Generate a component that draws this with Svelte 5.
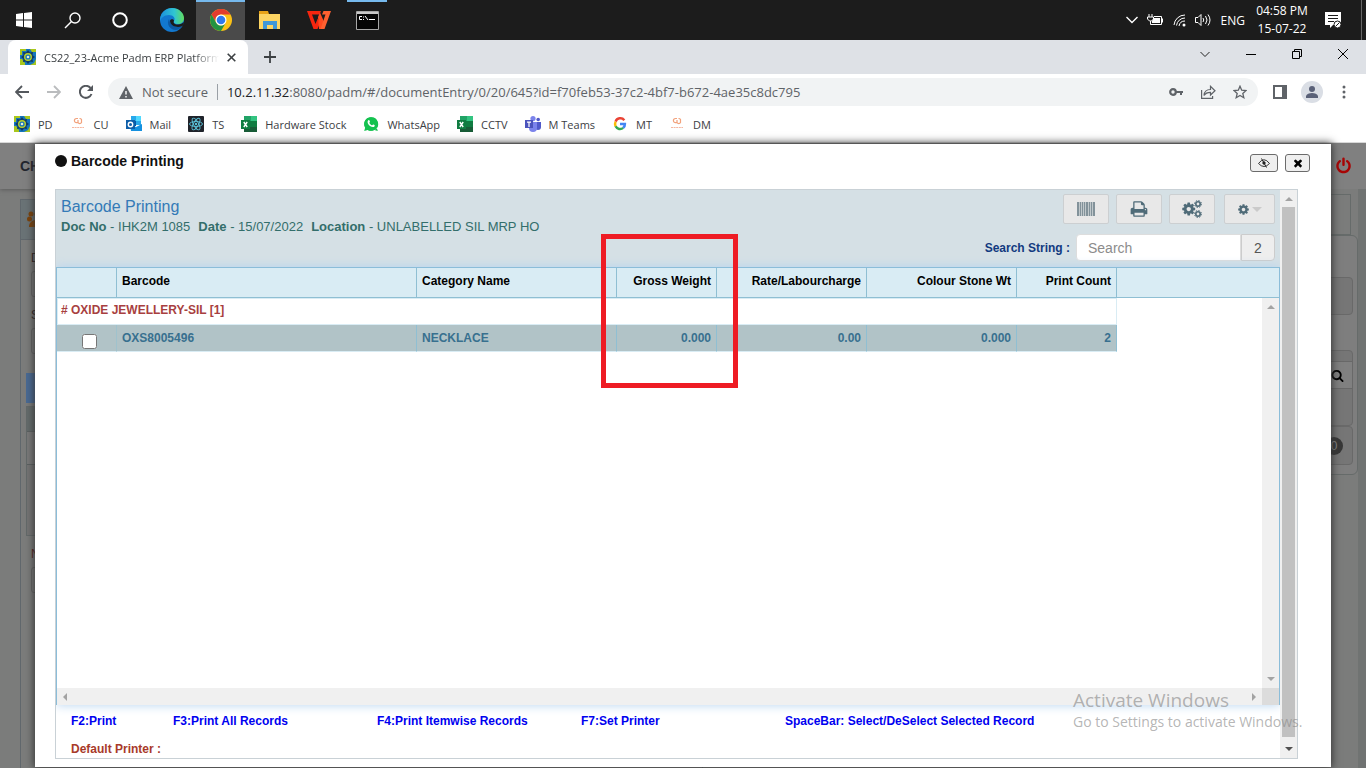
<script>
  const bookmarks = [
    { icon: 'padm', text: 'PD' },
    { icon: 'cu', text: 'CU' },
    { icon: 'outlook', text: 'Mail' },
    { icon: 'react', text: 'TS' },
    { icon: 'excel', text: 'Hardware Stock' },
    { icon: 'whatsapp', text: 'WhatsApp' },
    { icon: 'excel', text: 'CCTV' },
    { icon: 'teams', text: 'M Teams' },
    { icon: 'google', text: 'MT' },
    { icon: 'cu', text: 'DM' },
  ];

  const shortcuts = [
    'F2:Print',
    'F3:Print All Records',
    'F4:Print Itemwise Records',
    'F7:Set Printer',
    'SpaceBar: Select/DeSelect Selected Record',
  ];

  const rows = [
    { barcode: 'OXS8005496', category: 'NECKLACE', gross: '0.000', rate: '0.00', stone: '0.000', count: 2 },
  ];

  const barWidths = [2, 1, 1, 1, 2, 1, 1, 2];

  let search = $state('');
  let selected = $state([false]);

  const cog =
    'M1152 896q0-106-75-181t-181-75-181 75-75 181 75 181 181 75 181-75 75-181zm512-109v222q0 12-8 23t-20 13l-185 28q-19 54-39 91 35 50 107 138 10 12 10 25t-9 23q-27 37-99 108t-94 71q-12 0-26-9l-138-108q-44 23-91 38-16 136-29 186-7 28-36 28h-222q-14 0-24.5-8.5t-11.5-21.5l-28-184q-49-16-90-37l-141 107q-10 9-25 9-14 0-25-11-126-114-165-168-7-10-7-23 0-12 8-23 15-21 51-66.5t54-70.5q-27-50-41-99l-183-27q-13-2-21-12.5t-8-23.5v-222q0-12 8-23t19-13l186-28q14-46 39-92-40-57-107-138-10-12-10-24 0-10 9-23 26-36 98.5-107.5t94.5-71.5q13 0 26 10l138 107q44-23 91-38 16-136 29-186 7-28 36-28h222q14 0 24.5 8.5t11.5 21.5l28 184q49 16 90 37l142-107q9-9 24-9 13 0 25 10 129 119 165 170 7 8 7 22 0 12-8 23-15 21-51 66.5t-54 70.5q26 50 41 98l183 28q13 2 21 12.5t8 23.5z';
</script>

{#snippet siteIcon(name)}
  <svg class="siteIcon" viewBox="0 0 16 16" width="16" height="16" aria-hidden="true">
    {#if name === 'padm'}
      <path fill="#1575bd" d="M0 0h16v16H0z" />
      <path fill="#a9c71c" d="M0 0h6v2H2v4H0zM10 0h6v3h-4zM0 10h2l3 4v2H0zM16 10v6h-6l4-2z" />
      <path fill="#123c63" d="M3 3l3 .5L8 1l2 2.500L13 3l-.5 3L15 8l-2.500 2 .5 3-3-.5L8 15l-2-2.500L3 13l.5-3L1 8l2.500-2z" />
      <circle cx="8" cy="8" r="3.300" fill="#1575bd" stroke="#b8d22b" stroke-width="1.400" />
      <circle cx="8" cy="8" r="1.300" fill="#e8f0d0" />
    {:else if name === 'cu'}
      <path fill="none" stroke="#f2a27c" stroke-width="1.200" d="M8 2.500H6.500a2 2 0 000 4.200H8M8 4v2.500a2 2 0 003.500 0v-3a2 2 0 00-2-1" />
      <path stroke="#f6b7a0" stroke-dasharray="2 .6" d="M2 11.500h12" />
    {:else if name === 'outlook'}
      <path fill="#28a8ea" d="M5 0h10v9H5z" />
      <path fill="#50d9ff" d="M10 0h5v5h-5z" />
      <path fill="#0358a7" d="M5 5h5v5H5z" />
      <path fill="#1490df" d="M4 8l6 3 6-3v7H5z" />
      <path fill="#0f5ea8" d="M0 4h9v9H0z" />
      <circle cx="4.500" cy="8.500" r="2.200" fill="none" stroke="#fff" stroke-width="1.400" />
    {:else if name === 'react'}
      <rect width="16" height="16" rx="1" fill="#20232a" />
      <g fill="none" stroke="#5cc5dc" stroke-width=".9">
        <ellipse cx="8" cy="8" rx="6.500" ry="2.500" />
        <ellipse cx="8" cy="8" rx="6.500" ry="2.500" transform="rotate(60 8 8)" />
        <ellipse cx="8" cy="8" rx="6.500" ry="2.500" transform="rotate(120 8 8)" />
      </g>
      <circle cx="8" cy="8" r="1.200" fill="#5cc5dc" />
    {:else if name === 'excel'}
      <path fill="#21a366" d="M3 0h7v6H3z" />
      <path fill="#33c481" d="M10 0h6v6h-6z" />
      <path fill="#107c41" d="M3 5h13v6H3z" />
      <path fill="#185c37" d="M3 11h13v5H3z" />
      <path fill="#107c41" d="M0 4h9v9H0z" />
      <path stroke="#fff" stroke-width="1.400" d="M2.800 6l3.400 5M6.200 6l-3.400 5" />
    {:else if name === 'whatsapp'}
      <path fill="#14c24f" d="M8 1.200A6.800 6.800 0 112.300 11.600L1.200 15l3.500-.9A6.800 6.800 0 018 1.200z" transform="matrix(-1 0 0 1 16 0)" />
      <path fill="#14c24f" d="M8 1.200a6.800 6.800 0 11-3.300 12.700L1.200 15l1-3.600A6.800 6.800 0 018 1.200z" />
      <path fill="#fff" d="M5.300 4.300c1-.7 1.300.4 1.600 1.300.2.600-.7 1-.5 1.400.6 1.100 1.300 1.800 2.500 2.300.5.1.9-1.100 1.400-.8 1 .5 2 .7 1.300 1.700-1 1.400-2.800 1-4.700-.3C4.700 8.200 3.800 5.700 5.300 4.300z" />
    {:else if name === 'teams'}
      <circle cx="8" cy="2.600" r="2.600" fill="#7b83eb" />
      <circle cx="13.200" cy="3.500" r="1.800" fill="#5059c9" />
      <path fill="#5059c9" d="M10 6h6v5a3 3 0 01-6 0z" />
      <path fill="#7b83eb" d="M4 6h8v6a4 4 0 01-8 0z" />
      <path fill="#4b53bc" d="M0 4h8v8H0z" />
      <path stroke="#fff" stroke-width="1.200" d="M2 6.200h4M4 6v5" />
    {:else if name === 'google'}
      <g fill="none" stroke-width="2.500">
        <path stroke="#ea4335" d="M12.300 4.200A5 5 0 003.600 5.700" />
        <path stroke="#fbbc05" d="M3.600 5.700a5 5 0 000 4.600" />
        <path stroke="#34a853" d="M3.600 10.300a5 5 0 007.600 1.600" />
        <path stroke="#4285f4" d="M11.200 11.900A5 5 0 0012.900 8H8" />
      </g>
    {/if}
  </svg>
{/snippet}

<div class="screen">
  <header class="taskbar">
    <button aria-label="Start">
      <svg width="16" height="16" viewBox="0 0 16 16"><path fill="#fff" d="M0 2l7-1v6.500H0zM8 .9L16 0v7.500H8zM0 8.500h7V15l-7-1zM8 8.500h8V16l-8-1z" /></svg>
    </button>
    <button aria-label="Search Windows">
      <svg width="17" height="17" viewBox="0 0 17 17" fill="none" stroke="#fff" stroke-width="1.400"><circle cx="11" cy="6" r="5" /><path d="M7.500 9.500L1 16" /></svg>
    </button>
    <button aria-label="Cortana">
      <svg width="18" height="18" viewBox="0 0 18 18"><circle cx="9" cy="9" r="6.800" fill="none" stroke="#fff" stroke-width="2" /></svg>
    </button>
    <button class="app" aria-label="Edge">
      <svg width="24" height="24" viewBox="0 0 24 24">
        <defs>
          <linearGradient id="edgeTop" x1="0" x2="1"><stop stop-color="#1b8fdc" /><stop offset=".6" stop-color="#30c5d2" /><stop offset="1" stop-color="#62dc5c" /></linearGradient>
        </defs>
        <circle cx="12" cy="12" r="12" fill="#1278cf" />
        <path fill="url(#edgeTop)" d="M0 11C1 4 6 0 12 0c7 0 12 5 12 10 0 4-3 6-6 6-3 0-5-1-4-3 2-3-1-6-5-6-5 0-8 3-9 6z" />
        <path fill="#0c59a4" d="M9 11c-3 5 1 11 7 11 3-.6 5-2 6.500-4-4 2.500-12 1-13.500-7z" />
        <path fill="#1b1b1b" d="M14 12.500c-1 2 0 4 4 4 2.500 0 4.500-1 5.800-2.500.1 2-.5 3-1.300 4C17 20.500 10 18 10 12.500c1-2 3.500-1.500 4 0z" />
      </svg>
    </button>
    <button class="app active" aria-label="Chrome">
      <svg width="22" height="22" viewBox="0 0 22 22">
        <circle cx="11" cy="11" r="11" fill="#fbc116" />
        <path fill="#e33b2e" d="M1.500 5.500a11 11 0 0119 0H11a5.500 5.500 0 00-4.800 8.200z" />
        <path fill="#229342" d="M1.500 5.500l4.700 8.200A5.500 5.500 0 0011 16.500c2 0 3.800-1 4.800-2.800L11 22A11 11 0 011.500 5.500z" />
        <circle cx="11" cy="11" r="5.500" fill="#fff" />
        <circle cx="11" cy="11" r="4.300" fill="#3079ee" />
      </svg>
    </button>
    <button class="app" aria-label="File Explorer">
      <svg width="22" height="18" viewBox="0 0 22 18">
        <path fill="#e8a317" d="M0 0h9l1 3h11v3H0z" />
        <path fill="#fcd462" d="M0 3h21v15H0z" />
        <path fill="#3f97d8" d="M4 10h14v8h-4v-4H8v4H4z" />
      </svg>
    </button>
    <button class="app" aria-label="WPS Office">
      <svg width="24" height="18" viewBox="0 0 24 18">
        <path fill="#f5260f" d="M0 0h14l-1.500 3.500H5L8.500 13l2.200-5.500L13 12l-2.500 6h-4z" />
        <path fill="#ff4a20" d="M11 6l2-4.500L17.500 12 15.500 18H12z" />
        <path fill="#ff6030" d="M13.500 18L18.500 3.500H15L16.500 0H24l-6.500 18z" />
      </svg>
    </button>
    <button class="app running" aria-label="Command Prompt">
      <svg width="23" height="19" viewBox="0 0 23 19">
        <path fill="#050505" stroke="#a8a8a8" d="M.5.5h22v18H.5z" />
        <path fill="#c8c8c8" d="M1 1h21v2H1z" />
        <path stroke="#fff" fill="none" d="M6 5.500H3.500v3H6M7.500 5.500v1M7.500 8v1M9 5l3 4M13 8.500h6" />
      </svg>
    </button>

    <div class="tray">
      <svg width="12" height="8" viewBox="0 0 12 8"><path fill="none" stroke="#fff" stroke-width="1.400" d="M.5 1L6 6.500 11.500 1" /></svg>
      <svg width="17" height="14" viewBox="0 0 17 14"><path fill="none" stroke="#fff" d="M2 1v3M5 1v3M.5 4h6v2l-2 2h-2l-2-2zM3.500 8v3.500h11v-8H7" /><path fill="#fff" d="M7 5h6v5H5V8zM15 5.500h1v4h-1z" /></svg>
      <svg width="13" height="14" viewBox="0 0 13 14" fill="none" stroke="#fff"><path d="M1 12A11 11 0 0112 2M3.500 12.500A8.500 8.500 0 0112 5M6 13A6 6 0 0112 8" /><circle cx="11" cy="12" r="1.500" fill="#fff" stroke="none" /></svg>
      <svg width="17" height="14" viewBox="0 0 17 14" fill="none" stroke="#fff"><path d="M.5 4.500H3l3-3v11l-3-3H.5zM8 5q1.500 2 0 4M10.500 3q3 4 0 8M13 1.500q4 5.500 0 11" /></svg>
      <span class="lang">ENG</span>
      <span class="clock">04:58 PM<br />15-07-22</span>
      <svg width="17" height="17" viewBox="0 0 17 17"><path fill="#fff" d="M0 0h16v13H8l-3 3v-3H0z" /><path stroke="#1c1c1c" d="M3 3.500h10M3 6.500h10M3 9.500h6" /><circle cx="12.500" cy="12.500" r="3.500" fill="#fff" stroke="#1c1c1c" /><path stroke="#1c1c1c" d="M10.500 14.500l4-4" /></svg>
    </div>
  </header>

  <div class="tabStrip">
    <div class="tab">
      {@render siteIcon('padm')}
      <span class="tabTitle">CS22_23-Acme Padm ERP Platform</span>
      <button aria-label="Close tab">
        <svg width="9" height="9" viewBox="0 0 9 9"><path stroke="#3c4043" stroke-width="1.600" d="M.7.7l7.600 7.600M8.300.7L.7 8.300" /></svg>
      </button>
    </div>
    <button class="newTab" aria-label="New tab">
      <svg width="12" height="12" viewBox="0 0 12 12"><path stroke="#3c4043" stroke-width="1.800" d="M6 0v12M0 6h12" /></svg>
    </button>
    <div class="windowButtons">
      <button aria-label="Search tabs"><svg width="10" height="7" viewBox="0 0 10 7"><path fill="none" stroke="#222" d="M.5 1L5 5.500 9.500 1" /></svg></button>
      <button aria-label="Minimize"><svg width="10" height="2" viewBox="0 0 10 2"><path fill="#000" d="M0 1h10v1H0z" /></svg></button>
      <button aria-label="Restore"><svg width="10" height="10" viewBox="0 0 10 10"><path fill="none" stroke="#000" d="M.5 2.500h7v7h-7zM2.500 2V.5h7v7H8" /></svg></button>
      <button aria-label="Close"><svg width="10" height="10" viewBox="0 0 10 10"><path stroke="#000" d="M0 0l10 10M10 0L0 10" /></svg></button>
    </div>
  </div>

  <div class="toolbar">
    <button aria-label="Back"><svg width="14" height="14" viewBox="0 0 14 14" fill="none" stroke="#54585d" stroke-width="1.800"><path d="M14 7H1.500M7 1L1 7l6 6" /></svg></button>
    <button aria-label="Forward"><svg width="14" height="14" viewBox="0 0 14 14" fill="none" stroke="#babcbe" stroke-width="1.800"><path d="M0 7h12.500M7 1l6 6-6 6" /></svg></button>
    <button aria-label="Reload"><svg width="14" height="14" viewBox="0 0 14 14"><path fill="none" stroke="#54585d" stroke-width="2" d="M12.500 9A6 6 0 1111.500 3" /><path fill="#54585d" d="M14 0v6H8z" /></svg></button>
    <div class="addressBar">
      <svg width="14" height="13" viewBox="0 0 14 13"><path fill="#5f6368" d="M7 0l7 13H0z" /><path stroke="#fff" stroke-width="1.400" d="M7 5v3.500M7 10v1.400" /></svg>
      <span class="notSecure">Not secure</span>
      <span class="url"><b>10.2.11.32</b>:8080/padm/#/documentEntry/0/20/645?id=f70feb53-37c2-4bf7-b672-4ae35c8dc795</span>
      <button aria-label="Passwords"><svg width="14" height="8" viewBox="0 0 14 8"><circle cx="4" cy="4" r="2.800" fill="none" stroke="#5f6368" stroke-width="2.200" /><path fill="#5f6368" d="M7 3h7v2h-1v2h-2V5H7z" /></svg></button>
      <button aria-label="Share"><svg width="15" height="14" viewBox="0 0 15 14" fill="none" stroke="#5f6368" stroke-width="1.200"><path d="M.6 5v8.400h11V11M3 10.500c.3-4 3-6 6.500-6V1.300L14 5.700 9.500 10V7.300C6.500 7.300 4.500 8 3 10.500z" /></svg></button>
      <button aria-label="Bookmark"><svg width="14" height="14" viewBox="0 0 14 14"><path fill="none" stroke="#5f6368" stroke-width="1.300" d="M7 1.200l1.700 4 4.300.4-3.200 2.900 1 4.200L7 10.500l-3.800 2.200 1-4.200L1 5.600l4.300-.4z" /></svg></button>
    </div>
    <button class="sidePanel" aria-label="Side panel"><svg width="14" height="14" viewBox="0 0 14 14"><path fill="#5f6368" fill-rule="evenodd" d="M0 0h14v14H0zM2 2v10h7V2z" /></svg></button>
    <button class="profile" aria-label="Profile"><svg width="14" height="14" viewBox="0 0 14 14" fill="#5a6178"><circle cx="7" cy="4" r="3" /><path d="M1 13v-2c1-4 11-4 12 0v2z" /></svg></button>
    <button aria-label="Menu"><svg width="4" height="14" viewBox="0 0 4 14" fill="#5f6368"><circle cx="2" cy="2" r="1.500" /><circle cx="2" cy="7" r="1.500" /><circle cx="2" cy="12" r="1.500" /></svg></button>
  </div>

  <nav class="bookmarks">
    {#each bookmarks as bookmark}
      <a href="#/{bookmark.text}">{@render siteIcon(bookmark.icon)}{bookmark.text}</a>
    {/each}
  </nav>

  <div class="page">
    <!-- the document screen, dimmed behind the dialog -->
    <div class="backdrop">
      <div class="appBar">
        <strong>CH</strong>
        <svg width="17" height="18" viewBox="0 0 1792 1792"><path fill="#a80505" d="M1664 896q0 156-61 298t-164 245-245 164-298 61-298-61-245-164-164-245-61-298q0-182 80.500-343t226.500-270q43-32 95.500-25t83.500 50q32 42 24.500 94.500t-49.500 84.500q-98 74-151.500 181t-53.500 228q0 104 40.500 198.500t109.500 163.500 163.500 109.500 198.500 40.500 198.500-40.500 163.500-109.500 109.500-163.500 40.500-198.500q0-121-53.500-228t-151.500-181q-42-32-49.500-84.500t24.500-94.500q31-43 84-50t95 25q146 109 226.500 270t80.500 343zm-640-768v640q0 52-38 90t-90 38-90-38-38-90v-640q0-52 38-90t90-38 90 38 38 90z" /></svg>
      </div>
      <div class="columns">
        <div class="entry">
          <div class="entryHead">
            <svg width="16" height="16" viewBox="0 0 16 16" fill="#7d4208"><circle cx="4" cy="3" r="2.500" /><circle cx="2.500" cy="8" r="2.500" /><circle cx="10" cy="3" r="2.500" /><path d="M2 16c0-9 12-9 12 0z" /></svg>
          </div>
          <span class="label">D</span>
          <div class="field"></div>
          <span class="label">S</span>
          <div class="field"></div>
          <div class="blueBar"></div>
          <div class="lines"><div></div><div></div></div>
          <span class="label red">N</span>
          <div class="field"></div>
        </div>
        <div class="side">
          <div class="sideTop"></div>
          <div class="sideBody">
            <div class="box first"></div>
            <div class="box">
              <div class="find">
                <svg width="13" height="13" viewBox="0 0 1792 1792"><path d="M1216 832q0-185-131.500-316.500t-316.500-131.500-316.500 131.500-131.500 316.500 131.500 316.500 316.500 131.500 316.500-131.500 131.500-316.500zm512 832q0 52-38 90t-90 38q-54 0-90-38l-343-342q-179 124-399 124-143 0-273.500-55.500t-225-150-150-225-55.500-273.500 55.500-273.500 150-225 225-150 273.500-55.500 273.500 55.500 225 150 150 225 55.500 273.500q0 220-124 399l343 343q37 37 37 90z" /></svg>
              </div>
            </div>
            <div class="box total"><span>0</span></div>
          </div>
        </div>
      </div>
    </div>

    <div class="dialog" role="dialog" aria-labelledby="dialogTitle">
      <div class="dialogHead">
        <i class="dot"></i>
        <h1 id="dialogTitle">Barcode Printing</h1>
        <button class="wide" aria-label="Hide">
          <svg width="12" height="10" viewBox="0 0 12 10" fill="none" stroke="#222"><path stroke-width=".9" d="M.5 5.500q5.500-7.500 11 0-5.500 6-11 0z" /><circle cx="6" cy="5" r="1.200" fill="#222" /><path d="M3.500.5l5 9" /></svg>
        </button>
        <button aria-label="Close dialog">
          <svg width="12" height="12" viewBox="0 0 1792 1792"><path d="M1490 1322q0 40-28 68l-136 136q-28 28-68 28t-68-28l-294-294-294 294q-28 28-68 28t-68-28l-136-136q-28-28-28-68t28-68l294-294-294-294q-28-28-28-68t28-68l136-136q28-28 68-28t68 28l294 294 294-294q28-28 68-28t68 28l136 136q28 28 28 68t-28 68l-294 294 294 294q28 28 28 68z" /></svg>
        </button>
      </div>

      <div class="panel">
        <div class="content">
          <div class="docHead">
            <div class="docInfo">
              <h2>Barcode Printing</h2>
              <p>
                <span><b>Doc No</b> - IHK2M 1085</span>
                <span><b>Date</b> - 15/07/2022</span>
                <span><b>Location</b> - UNLABELLED SIL MRP HO</span>
              </p>
            </div>
            <div class="docTools">
              <div class="actions">
                <button aria-label="Print barcode">
                  <span class="bars">
                    {#each barWidths as width}<i style="width: {width}px"></i>{/each}
                  </span>
                </button>
                <button aria-label="Print">
                  <svg width="18" height="18" viewBox="0 0 1792 1792"><path d="M448 1536h896v-256h-896v256zm0-640h896v-384h-160q-40 0-68-28t-28-68v-160h-640v640zm1152 64q0-26-19-45t-45-19-45 19-19 45 19 45 45 19 45-19 19-45zm128 0v416q0 13-9.500 22.500t-22.500 9.500h-224v160q0 40-28 68t-68 28h-960q-40 0-68-28t-28-68v-160h-224q-13 0-22.500-9.500t-9.500-22.500v-416q0-79 56.500-135.500t135.500-56.500h64v-544q0-40 28-68t68-28h672q40 0 88 20t76 48l152 152q28 28 48 76t20 88v256h64q79 0 135.500 56.500t56.500 135.500z" /></svg>
                </button>
                <button aria-label="Printer settings">
                  <svg width="20" height="18" viewBox="0 0 20 18">
                    <path d={cog} transform="translate(-.8 1.500) scale(.0084)" />
                    <g fill="none" stroke="#4f6b78">
                      <circle cx="16" cy="4" r="2.200" stroke-width="1.600" />
                      <circle cx="16" cy="4" r="3.500" stroke-dasharray="1.400 1.350" />
                      <circle cx="16" cy="14" r="2.200" stroke-width="1.600" />
                      <circle cx="16" cy="14" r="3.500" stroke-dasharray="1.400 1.350" />
                    </g>
                  </svg>
                </button>
                <button class="options" aria-label="Options">
                  <svg width="11" height="11" viewBox="100 100 1592 1592"><path d={cog} /></svg>
                  <svg width="10" height="5" viewBox="0 0 10 5"><path fill="#cacaca" d="M0 0h10L5 5z" /></svg>
                </button>
              </div>
              <div class="search">
                <label for="search">Search String :</label>
                <input id="search" type="text" placeholder="Search" bind:value={search} />
                <span>2</span>
              </div>
            </div>
          </div>

          <div class="grid">
            <table>
              <colgroup>
                <col class="w60" />
                <col class="w300" />
                <col class="w200" />
                <col class="w100" />
                <col class="w150" />
                <col class="w150" />
                <col class="w100" />
                <col />
              </colgroup>
              <thead>
                <tr>
                  <th></th>
                  <th>Barcode</th>
                  <th>Category Name</th>
                  <th class="num">Gross Weight</th>
                  <th class="num">Rate/Labourcharge</th>
                  <th class="num">Colour Stone Wt</th>
                  <th class="num">Print Count</th>
                  <th></th>
                </tr>
              </thead>
              <tbody>
                <tr class="group"><td colspan="7"># OXIDE JEWELLERY-SIL [1]</td></tr>
                {#each rows as row, i}
                  <tr class="record">
                    <td class="check"><input type="checkbox" aria-label="Select {row.barcode}" bind:checked={selected[i]} /></td>
                    <td>{row.barcode}</td>
                    <td>{row.category}</td>
                    <td class="num">{row.gross}</td>
                    <td class="num">{row.rate}</td>
                    <td class="num">{row.stone}</td>
                    <td class="num">{row.count}</td>
                  </tr>
                {/each}
              </tbody>
            </table>
            <div class="scrollY"><i class="up"></i><i class="down"></i></div>
            <div class="scrollX"><i class="left"></i><i class="right"></i></div>
            <div class="corner"></div>
            <div class="highlight"></div>
          </div>

          <div class="shortcuts">
            {#each shortcuts as shortcut}
              <span>{shortcut}</span>
            {/each}
          </div>
          <div class="printer">Default Printer :</div>
        </div>

        <div class="scrollY"><i class="up"></i><div class="thumb"></div><i class="down dark"></i></div>
      </div>
    </div>
  </div>

  <div class="watermark">
    <div>Activate Windows</div>
    <p>Go to Settings to activate Windows.</p>
  </div>
</div>

<style>
  :global(body) {
    margin: 0;
  }

  .screen,
  .screen * {
    box-sizing: border-box;
  }

  .screen {
    position: relative;
    display: flex;
    flex-direction: column;
    height: 100vh;
    overflow: hidden;
    font-family: "Liberation Sans", Arial, sans-serif;
    font-size: 12px;
    background: #fff;
  }

  svg {
    flex: none;
    display: block;
  }

  button {
    display: flex;
    align-items: center;
    justify-content: center;
    padding: 0;
    border: none;
    background: none;
    cursor: pointer;
  }

  h1,
  h2,
  p {
    margin: 0;
  }

  /* windows taskbar */
  .taskbar {
    display: flex;
    flex: none;
    height: 40px;
    background: #1c1c1c;
    color: #fff;
    font-family: "Open Sans", "Segoe UI", sans-serif;
  }

  .taskbar > button {
    width: 48px;
    border-top: 2px solid transparent;
    border-bottom: 2px solid transparent;
  }

  .taskbar > button.app {
    width: 49px;
  }

  /* gap between the system buttons and the pinned apps */
  .taskbar > button:nth-child(4) {
    margin-left: 3px;
  }

  .taskbar > button.active {
    background: #4a4a4a;
    border-top-color: #76b9ed;
    border-bottom-color: #4a4a4a;
  }

  .taskbar > button.running {
    width: 40px;
    margin-left: 4px;
    border-top-color: #76b9ed;
  }

  .tray {
    display: flex;
    align-items: center;
    gap: 9px;
    margin-left: auto;
    margin-right: 4px;
    padding-right: 19px;
    border-right: 1px solid #666;
  }

  .clock {
    width: 56px;
    margin-right: 6px;
    text-align: center;
    line-height: 18px;
    white-space: nowrap;
  }

  /* browser */
  .tabStrip {
    display: flex;
    flex: none;
    height: 34px;
    padding-left: 8px;
    background: #dee1e6;
    font-family: "Open Sans", "Segoe UI", sans-serif;
    font-size: 11px;
  }

  .tab {
    display: flex;
    align-items: center;
    gap: 8px;
    width: 240px;
    padding: 0 12px;
    border-radius: 8px 8px 0 0;
    background: #fff;
    color: #3c4043;
  }

  .tabTitle {
    flex: 1;
    overflow: hidden;
    white-space: nowrap;
    mask-image: linear-gradient(to right, #000 85%, transparent);
  }

  .newTab {
    width: 44px;
  }

  .windowButtons {
    display: flex;
    margin-left: auto;
    padding-bottom: 6px;
  }

  .windowButtons button {
    width: 46px;
  }

  .toolbar {
    display: flex;
    flex: none;
    align-items: center;
    height: 36px;
    padding: 0 6px;
    font-family: "Open Sans", "Segoe UI", sans-serif;
  }

  .toolbar > button {
    width: 32px;
    height: 28px;
  }

  .addressBar {
    display: flex;
    flex: 1;
    align-items: center;
    height: 28px;
    margin: 0 6px;
    padding: 0 2px 0 11px;
    border-radius: 14px;
    background: #f1f3f4;
    color: #5f6368;
    font-size: 13px;
    white-space: nowrap;
  }

  .notSecure {
    margin-left: 9px;
    padding-right: 9px;
    border-right: 1px solid #9aa0a6;
    line-height: 16px;
  }

  .url {
    flex: 1;
    margin-left: 9px;
  }

  .url b {
    color: #202124;
    font-weight: normal;
  }

  .addressBar button {
    width: 32px;
  }

  .toolbar .profile {
    width: 22px;
    height: 22px;
    margin: 0 5px;
    border-radius: 50%;
    background: #dadee5;
  }

  .bookmarks {
    display: flex;
    flex: none;
    align-items: center;
    gap: 17px;
    height: 33px;
    padding: 0 14px 4px;
    border-bottom: 1px solid #d8d8d8;
    font-family: "Open Sans", "Segoe UI", sans-serif;
    font-size: 11px;
  }

  .bookmarks a {
    display: flex;
    align-items: center;
    gap: 8px;
    color: #3c4043;
    text-decoration: none;
    white-space: nowrap;
  }

  /* dimmed page */
  .page {
    position: relative;
    flex: 1;
    min-height: 0;
    background: #4c4c4c;
  }

  .backdrop {
    height: 100%;
    overflow: hidden;
    background: #7b7c7b;
  }

  .appBar {
    display: flex;
    align-items: center;
    justify-content: space-between;
    height: 46px;
    padding: 0 14px 0 20px;
    background: #808080;
    box-shadow: 0 1px 4px #5c5c5c;
    color: #23262e;
    font-size: 14px;
  }

  .columns {
    display: flex;
    justify-content: space-between;
    height: 100%;
  }

  .entry {
    width: 50%;
    margin: 10px 0 0 20px;
    border: 1px solid #60676c;
  }

  .entryHead {
    height: 40px;
    padding: 11px 6px;
    background: #6a7376;
    border-bottom: 1px solid #60676c;
  }

  .entry .label {
    display: block;
    margin: 10px 10px 5px;
    line-height: 16px;
    color: #2c2020;
  }

  .entry .label.red {
    color: #57201c;
  }

  .entry .field {
    height: 26px;
    margin: 0 10px;
    border: 1px solid #646464;
    border-radius: 3px;
  }

  .blueBar {
    height: 30px;
    margin: 19px 5px 3px;
    background: #496a94;
  }

  .lines {
    height: 130px;
    margin: 0 5px;
    border: 1px solid #646a6a;
    background: #757575;
  }

  .lines div {
    height: 25px;
    background: #656c6c;
    border-bottom: 1px solid #5c6161;
  }

  .lines div + div {
    height: 33px;
    background: #7a7a7a;
  }

  .side {
    width: 40%;
    padding: 5px 8px 0 0;
    background: linear-gradient(to left, #707372 8px, #7b7c7b 8px);
  }

  .sideTop {
    height: 41px;
    margin-right: 7px;
    border: 1px solid #666b6a;
  }

  .sideBody {
    height: 240px;
    padding: 41px 4px 0 0;
    border: 1px solid #666b6a;
    border-radius: 0 6px 6px 0;
    background: #7e7e7e;
  }

  .box {
    height: 76px;
    border: 1px solid #696969;
    border-radius: 4px;
    background: #767676;
  }

  .box.first {
    height: 38px;
    margin-bottom: 35px;
  }

  .find {
    display: flex;
    align-items: center;
    justify-content: flex-end;
    height: 28px;
    margin-top: 10px;
    padding-right: 8px;
    border: 1px solid #686868;
    border-width: 1px 0;
    background: #808080;
  }

  .box.total {
    display: flex;
    align-items: center;
    justify-content: flex-end;
    height: 39px;
    padding-right: 9px;
  }

  .total span {
    width: 18px;
    border-radius: 9px;
    background: #373737;
    color: #858585;
    line-height: 18px;
    text-align: center;
  }

  /* dialog */
  .dialog {
    position: absolute;
    inset: 1px 35px;
    display: flex;
    flex-direction: column;
    padding: 0 33px 8px 20px;
    background: #fff;
    box-shadow: 0 0 8px 1px #333;
  }

  .dialogHead {
    display: flex;
    align-items: center;
    flex: none;
    height: 45px;
    padding-bottom: 12px;
    /* the buttons reach past the panel's right edge */
    margin-right: -12px;
  }

  .dot {
    width: 12px;
    height: 12px;
    margin-right: 4px;
    border-radius: 50%;
    background: #111;
  }

  h1 {
    flex: 1;
    color: #111;
    font-size: 14px;
  }

  .dialogHead button {
    width: 25px;
    height: 18px;
    margin: 4px 0 0 7px;
    border: 1px solid #6b6b6b;
    border-radius: 3px;
    background: #efefef;
  }

  .dialogHead button.wide {
    width: 28px;
  }

  .panel {
    display: flex;
    flex: 1;
    min-height: 0;
    border: 1px solid #c9d1d6;
  }

  .content {
    display: flex;
    flex: 1;
    flex-direction: column;
    min-width: 0;
    overflow: hidden;
  }

  .docHead {
    display: flex;
    justify-content: space-between;
    flex: none;
    height: 77px;
    padding: 4px 5px;
    background: #d5e0e5;
  }

  h2 {
    margin-top: 2px;
    color: #337ab7;
    font-size: 16px;
    font-weight: normal;
    line-height: 22px;
  }

  .docInfo p {
    display: flex;
    gap: 8px;
    color: #336e6b;
    font-size: 13px;
    line-height: 18px;
  }

  .actions {
    display: flex;
    justify-content: flex-end;
    gap: 7px;
    margin-bottom: 10px;
  }

  .actions button {
    width: 46px;
    height: 30px;
    border: 1px solid #cccfd1;
    border-radius: 2px;
    background: #e8e8e8;
    fill: #4f6b78;
  }

  .actions button.options {
    gap: 3px;
    width: 51px;
    margin-left: 2px;
  }

  .bars {
    display: flex;
    justify-content: space-between;
    width: 18px;
    height: 14px;
    background: #c0c8cb;
  }

  .bars i {
    background: #82929a;
  }

  .search {
    display: flex;
    align-items: center;
    justify-content: flex-end;
    height: 27px;
  }

  .search label {
    margin-right: 6px;
    color: #123a80;
    font-weight: bold;
  }

  .search input {
    width: 165px;
    height: 27px;
    padding: 0 11px;
    border: 1px solid #ddd;
    border-radius: 4px 0 0 4px;
    background: #fff;
    font-family: inherit;
    font-size: 14px;
  }

  .search input::placeholder {
    color: #8c8c8c;
  }

  .search span {
    width: 34px;
    height: 27px;
    border: 1px solid #ccc;
    border-radius: 0 4px 4px 0;
    background: #eee;
    color: #555;
    font-size: 14px;
    line-height: 26px;
    text-align: center;
  }

  .grid {
    position: relative;
    display: grid;
    grid-template-columns: 1fr 17px;
    grid-template-rows: 30px 1fr 17px;
    flex: 1;
    border: 1px solid #8bbdd9;
    border-bottom: none;
    box-shadow: 0 0 10px #b5d3f0;
  }

  .grid::before {
    content: "";
    grid-area: 1 / 1 / 4 / 3;
    background: #fff;
  }

  table {
    grid-area: 1 / 1 / 3 / 3;
    align-self: start;
    width: 100%;
    table-layout: fixed;
    border-collapse: separate;
    border-spacing: 0;
    font-weight: bold;
  }

  .w60 {
    width: 60px;
  }

  .w100 {
    width: 100px;
  }

  .w150 {
    width: 150px;
  }

  .w200 {
    width: 200px;
  }

  .w300 {
    width: 300px;
  }

  th,
  td {
    height: 27px;
    padding: 0 5px;
    border-right: 1px solid #8fbfd3;
    text-align: left;
    white-space: nowrap;
  }

  th {
    height: 30px;
    padding-bottom: 3px;
    border-bottom: 1px solid #8fbfd3;
    background: #d9ecf4;
    color: #000;
  }

  th:last-child {
    border-right: none;
  }

  .num {
    text-align: right;
  }

  .group td {
    padding: 0 3px 3px;
    border: 1px solid #d9ecf4;
    color: #a83f3f;
  }

  .record td {
    background: #b1c3c7;
    border-bottom: 1px solid #d9ecf4;
    color: #38708f;
  }

  .record td.check {
    text-align: center;
    border-right-color: #9fc2cd;
  }

  .check input {
    width: 15px;
    height: 15px;
    margin: 6px 0 0 6px;
    vertical-align: top;
  }

  .scrollY {
    grid-area: 2 / 2;
    display: flex;
    flex-direction: column;
    align-items: center;
    justify-content: space-between;
    width: 17px;
    padding: 7px 0;
    background: #f0f0f0;
  }

  .scrollX {
    grid-area: 3 / 1;
    display: flex;
    align-items: center;
    justify-content: space-between;
    padding: 0 6px;
    background: #f0f0f0;
  }

  .corner {
    grid-area: 3 / 2;
    background: #dcdcdc;
  }

  .scrollY i,
  .scrollX i {
    border: 4px solid transparent;
  }

  .scrollY .up {
    border-top: none;
    border-bottom-color: #a3a3a3;
  }

  .scrollY .down {
    border-bottom: none;
    border-top-color: #a3a3a3;
  }

  .scrollY .down.dark {
    border-top-color: #505050;
  }

  .scrollX .left {
    border-left: none;
    border-right-color: #a3a3a3;
  }

  .scrollX .right {
    border-right: none;
    border-left-color: #a3a3a3;
  }

  .thumb {
    flex: 1;
    width: 13px;
    margin: 6px 0 10px;
    background: #c1c1c1;
  }

  .highlight {
    position: absolute;
    top: -34px;
    left: 544px;
    width: 137px;
    height: 154px;
    border: 5px solid #ee1c24;
  }

  .docHead {
    overflow: visible;
  }

  .shortcuts {
    display: grid;
    grid-template-columns: 1fr 2fr 2fr 2fr 5fr;
    flex: none;
    padding-top: 7px;
    color: #0000f0;
    font-weight: bold;
    line-height: 18px;
    white-space: nowrap;
  }

  .shortcuts span {
    padding-left: 15px;
  }

  .printer {
    flex: none;
    padding: 10px 15px 0;
    color: #a83a2a;
    font-weight: bold;
    line-height: 18px;
  }

  .watermark {
    position: absolute;
    right: 57px;
    bottom: 36px;
    width: 236px;
    color: rgba(140, 140, 140, 0.65);
    font-family: "Open Sans", "Segoe UI", sans-serif;
    font-size: 19px;
    line-height: 24px;
    white-space: nowrap;
    pointer-events: none;
  }

  .watermark p {
    font-size: 14px;
    line-height: 20px;
  }

  .taskbar .lang,
  .taskbar .clock {
    font-size: 12px;
  }
</style>
